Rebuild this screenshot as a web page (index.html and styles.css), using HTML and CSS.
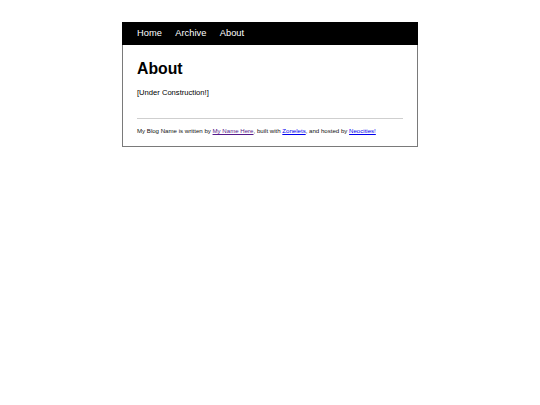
FILE: index.html
```html
<!DOCTYPE html>
<html lang="en">
<head>
<meta charset="utf-8">
<title>About</title>
<link rel="stylesheet" href="styles.css">
</head>
<body>
<div class="page">
  <header class="top">
    <nav class="nav">
      <a href="#">Home</a>
      <a href="#">Archive</a>
      <a href="#">About</a>
    </nav>
  </header>
  <main class="main">
    <h1 class="title">About</h1>
    <p class="text">[Under Construction!]</p>
    <hr class="rule">
    <footer class="foot">
      My Blog Name is written by <a class="visited" href="#">My Name Here</a>, built with <a class="link" href="#">Zonelets</a>, and hosted by <a class="link" href="#">Neocities!</a>
    </footer>
  </main>
</div>
</body>
</html>
```

FILE: styles.css
```css
html, body {
  margin: 0;
  padding: 0;
  background: #fff;
}
body {
  font-family: "Liberation Sans", Arial, sans-serif;
  color: #000;
}
.page {
  width: 296px;
  margin: 22px auto 0;
}
.top {
  background: #000;
  height: 23px;
  display: flex;
  align-items: center;
  padding-left: 15px;
}
.nav {
  display: flex;
  gap: 13.5px;
}
.nav a {
  color: #fff;
  text-decoration: none;
  font-size: 9.3px;
  line-height: 11px;
}
.main {
  border: 1px solid #7a7a7a;
  border-top: 0;
  padding: 15px 14px 12px 14px;
}
.title {
  margin: 0;
  font-size: 15.8px;
  line-height: 18px;
  font-weight: bold;
}
.text {
  margin: 10px 0 0;
  font-size: 7.6px;
  line-height: 9px;
}
.rule {
  margin: 21px 0 0;
  border: 0;
  border-top: 1px solid #cfcfcf;
  height: 0;
}
.foot {
  margin-top: 8px;
  font-size: 6.1px;
  line-height: 7px;
  color: #111;
}
.foot a.visited {
  color: #551a8b;
}
.foot a.link {
  color: #0000ee;
}
```
